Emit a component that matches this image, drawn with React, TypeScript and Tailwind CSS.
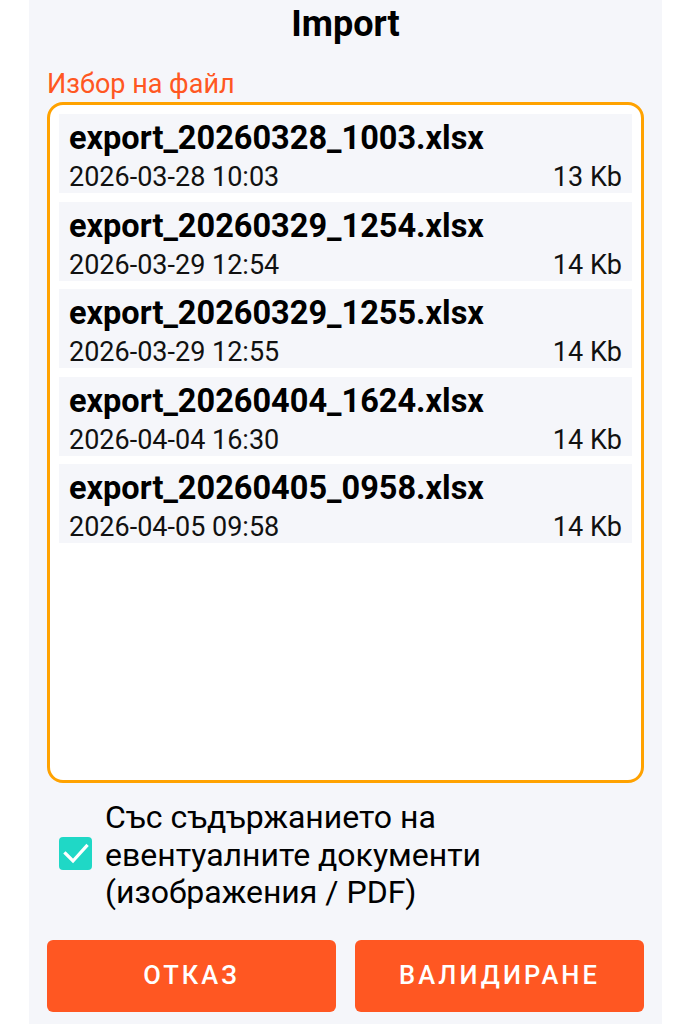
import React from "react";

type FileEntry = { name: string; date: string; size: string };

const files: FileEntry[] = [
  { name: "export_20260328_1003.xlsx", date: "2026-03-28 10:03", size: "13 Kb" },
  { name: "export_20260329_1254.xlsx", date: "2026-03-29 12:54", size: "14 Kb" },
  { name: "export_20260329_1255.xlsx", date: "2026-03-29 12:55", size: "14 Kb" },
  { name: "export_20260404_1624.xlsx", date: "2026-04-04 16:30", size: "14 Kb" },
  { name: "export_20260405_0958.xlsx", date: "2026-04-05 09:58", size: "14 Kb" },
];

function FileRow({ f }: { f: FileEntry }) {
  return (
    <div className="bg-[#f5f6fa] pl-[10px] pr-[10px] pt-[6px] h-[79px] overflow-hidden">
      <div className="text-[32.5px] leading-[36px] font-bold text-black whitespace-nowrap">{f.name}</div>
      <div className="mt-[6px] flex justify-between text-[27px] leading-[31px] text-[#111]">
        <span>{f.date}</span>
        <span>{f.size}</span>
      </div>
    </div>
  );
}

export default function App() {
  return (
    <div
      className="w-full h-[1024px] bg-white flex justify-center overflow-hidden"
      style={{ fontFamily: "Roboto, 'Noto Sans', sans-serif" }}
    >
      <div className="w-[633px] h-full bg-[#f5f6fa] flex flex-col px-[18px]">
        <h1 className="text-center text-[36px] leading-[48px] font-bold text-black">Import</h1>

        <div className="mt-[22px] text-[27px] leading-[28px] text-[#ff5722]">Избор на файл</div>

        <div className="mt-[4px] h-[681px] border-[3px] border-[#ffa200] rounded-[16px] bg-white p-[9px] flex flex-col gap-[8.5px]">
          {files.map((f) => (
            <FileRow key={f.name} f={f} />
          ))}
        </div>

        <div className="mt-[16px] flex items-center pl-[12px] gap-[13px]">
          <div className="w-[33px] h-[33px] -mt-[4px] rounded-[4px] bg-[#1fd8c6] shrink-0">
            <svg width="33" height="33" viewBox="0 0 33 33" fill="none">
              <path d="M6.5 16.5L14 24L27.5 9" stroke="white" strokeWidth="3.2" strokeLinecap="square" strokeLinejoin="miter" />
            </svg>
          </div>
          <div className="text-[32px] leading-[37.5px] text-black">
            Със съдържанието на
            <br />
            евентуалните документи
            <br />
            (изображения / PDF)
          </div>
        </div>

        <div className="mt-[28px] flex gap-[19px]">
          <button className="flex-1 h-[72px] rounded-[6px] bg-[#ff5722] text-white text-[25.5px] font-medium tracking-[0.12em]">
            ОТКАЗ
          </button>
          <button className="flex-1 h-[72px] rounded-[6px] bg-[#ff5722] text-white text-[25.5px] font-medium tracking-[0.12em]">
            ВАЛИДИРАНЕ
          </button>
        </div>
      </div>
    </div>
  );
}
